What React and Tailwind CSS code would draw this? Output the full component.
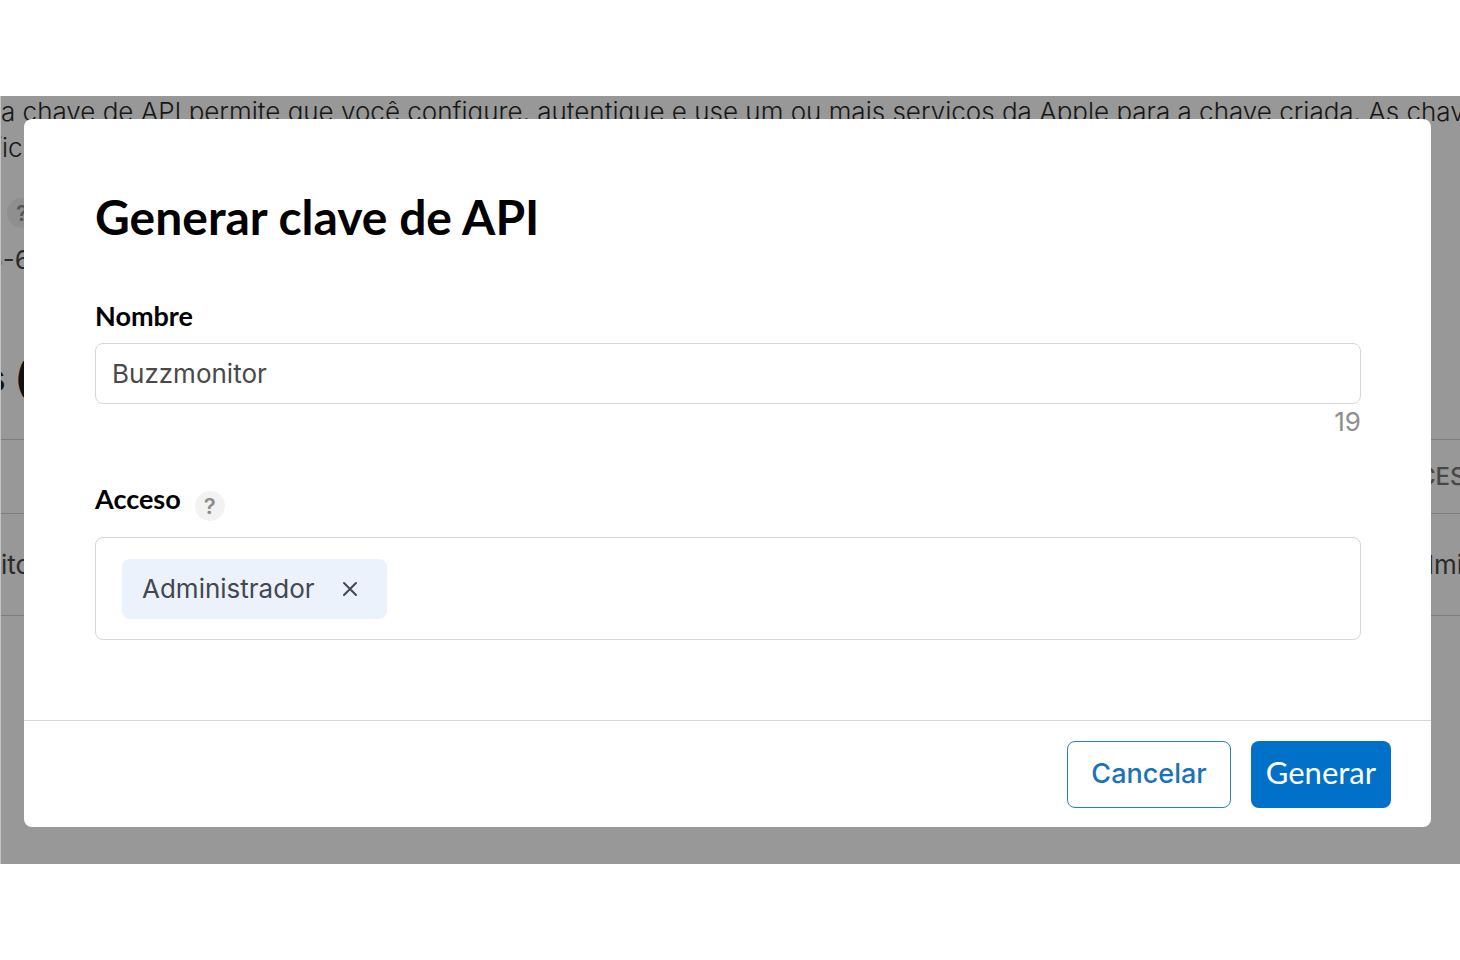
import React, { useState } from "react";

const roles = ["Administrador"];

function HelpBadge({ className }) {
    return (
        <button type="button" aria-label="Ayuda" className={`flex size-[30px] shrink-0 items-center justify-center rounded-full text-[22px] leading-none font-semibold ${className}`}>
            ?
        </button>
    )
}

// Page that stays visible around the dialog
function PageBehind() {
    return (
        <div className="col-start-1 row-start-1 h-0 min-w-0 text-[26px] leading-9 text-[#2a2a2a]" aria-hidden="true">
            <p className="-mt-0.5 whitespace-nowrap font-light text-[#161616]">
                a chave de API permite que você configure, autentique e use um ou mais serviços da Apple para a chave criada. As chaves
                <br />
                <span className="-ml-2">fic</span>
            </p>
            <HelpBadge className="mt-8 ml-1.5 bg-[#8f8f8f] text-[#555555]" />
            <p className="mt-3.5 -ml-3.5">5-6</p>
            <h2 className="mt-[76px] -ml-[18px] text-[40px] leading-[48px] font-bold text-[#111111]">s (</h2>
            <table className="mt-[37px] w-full table-fixed border-collapse text-left">
                <thead>
                    <tr className="h-[74px] border-y border-[#7d7d7d] text-[24px] text-[#474747]">
                        <th></th>
                        <th className="w-[42px] font-medium">CESO</th>
                    </tr>
                </thead>
                <tbody>
                    <tr className="h-[102px] border-b border-[#7d7d7d]">
                        <td>itor</td>
                        <td className="w-[42px]">dmin</td>
                    </tr>
                </tbody>
            </table>
        </div>
    )
}

function App() {
    const [name, setName] = useState("Buzzmonitor");
    const [access, setAccess] = useState(roles);

    return (
        <main className="flex min-h-screen flex-col justify-center bg-white font-['Inter',sans-serif]">
            <div className="grid grid-cols-1 overflow-hidden border-l border-[#c4c4c4] bg-[#989898]">
                <PageBehind />

                <form role="dialog" aria-labelledby="title" className="z-10 col-start-1 row-start-1 mt-[23px] mr-[29px] mb-[37px] ml-[23px] rounded-lg bg-white" onSubmit={(e) => e.preventDefault()}>
                    <div className="pt-[68px] pr-[70px] pb-20 pl-[71px]">
                        <h1 id="title" className="font-['Lato',sans-serif] text-[48px] leading-[60px] font-bold text-black">
                            Generar clave de API
                        </h1>

                        <label htmlFor="name" className="mt-[51px] block font-['Lato',sans-serif] text-[27px] leading-9 font-bold text-black">
                            Nombre
                        </label>
                        <input
                            id="name"
                            value={name}
                            maxLength={30}
                            onChange={(e) => setName(e.target.value)}
                            className="mt-[9px] block h-[61px] w-full rounded-lg border border-[#d6d6d6] px-4 text-[26px] text-[#494949]"
                        />
                        <p className="text-right text-[26px] leading-9 text-[#8e8e8e]">{30 - name.length}</p>

                        <div className="mt-[41px] flex gap-3.5">
                            <h2 id="access" className="font-['Lato',sans-serif] text-[27px] leading-9 font-bold text-black">
                                Acceso
                            </h2>
                            <HelpBadge className="mt-2.5 bg-[#f2f2f2] text-[#8c8c8c]" />
                        </div>
                        <ul aria-labelledby="access" className="mt-4 flex min-h-[103px] items-center gap-3 rounded-lg border border-[#d6d6d6] px-[26px] py-5">
                            {access.map((role) => (
                                <li key={role} className="flex h-[60px] items-center gap-[26px] rounded-lg bg-[#ebf2fb] pr-7 pl-5 text-[26px] text-[#43474e]">
                                    {role}
                                    <button type="button" aria-label={`Quitar ${role}`} onClick={() => setAccess(access.filter((r) => r !== role))}>
                                        <svg viewBox="0 0 18 18" className="size-[18px]" fill="none" stroke="currentColor" strokeWidth="2" strokeLinecap="round">
                                            <path d="M3 3l12 12M15 3L3 15" />
                                        </svg>
                                    </button>
                                </li>
                            ))}
                        </ul>
                    </div>

                    <div className="flex justify-end gap-5 border-t border-[#d6d6d6] px-10 pt-5 pb-[19px]">
                        <button type="button" className="h-[67px] rounded-lg border border-[#2a7fc0] px-[23px] text-[27px] font-medium text-[#1a72b8]">
                            Cancelar
                        </button>
                        <button type="submit" className="h-[67px] rounded-lg bg-[#0070c9] px-[15px] pb-1 font-['Lato',sans-serif] text-[31px] text-white">
                            Generar
                        </button>
                    </div>
                </form>
            </div>
        </main>
    )
}

export default App;
